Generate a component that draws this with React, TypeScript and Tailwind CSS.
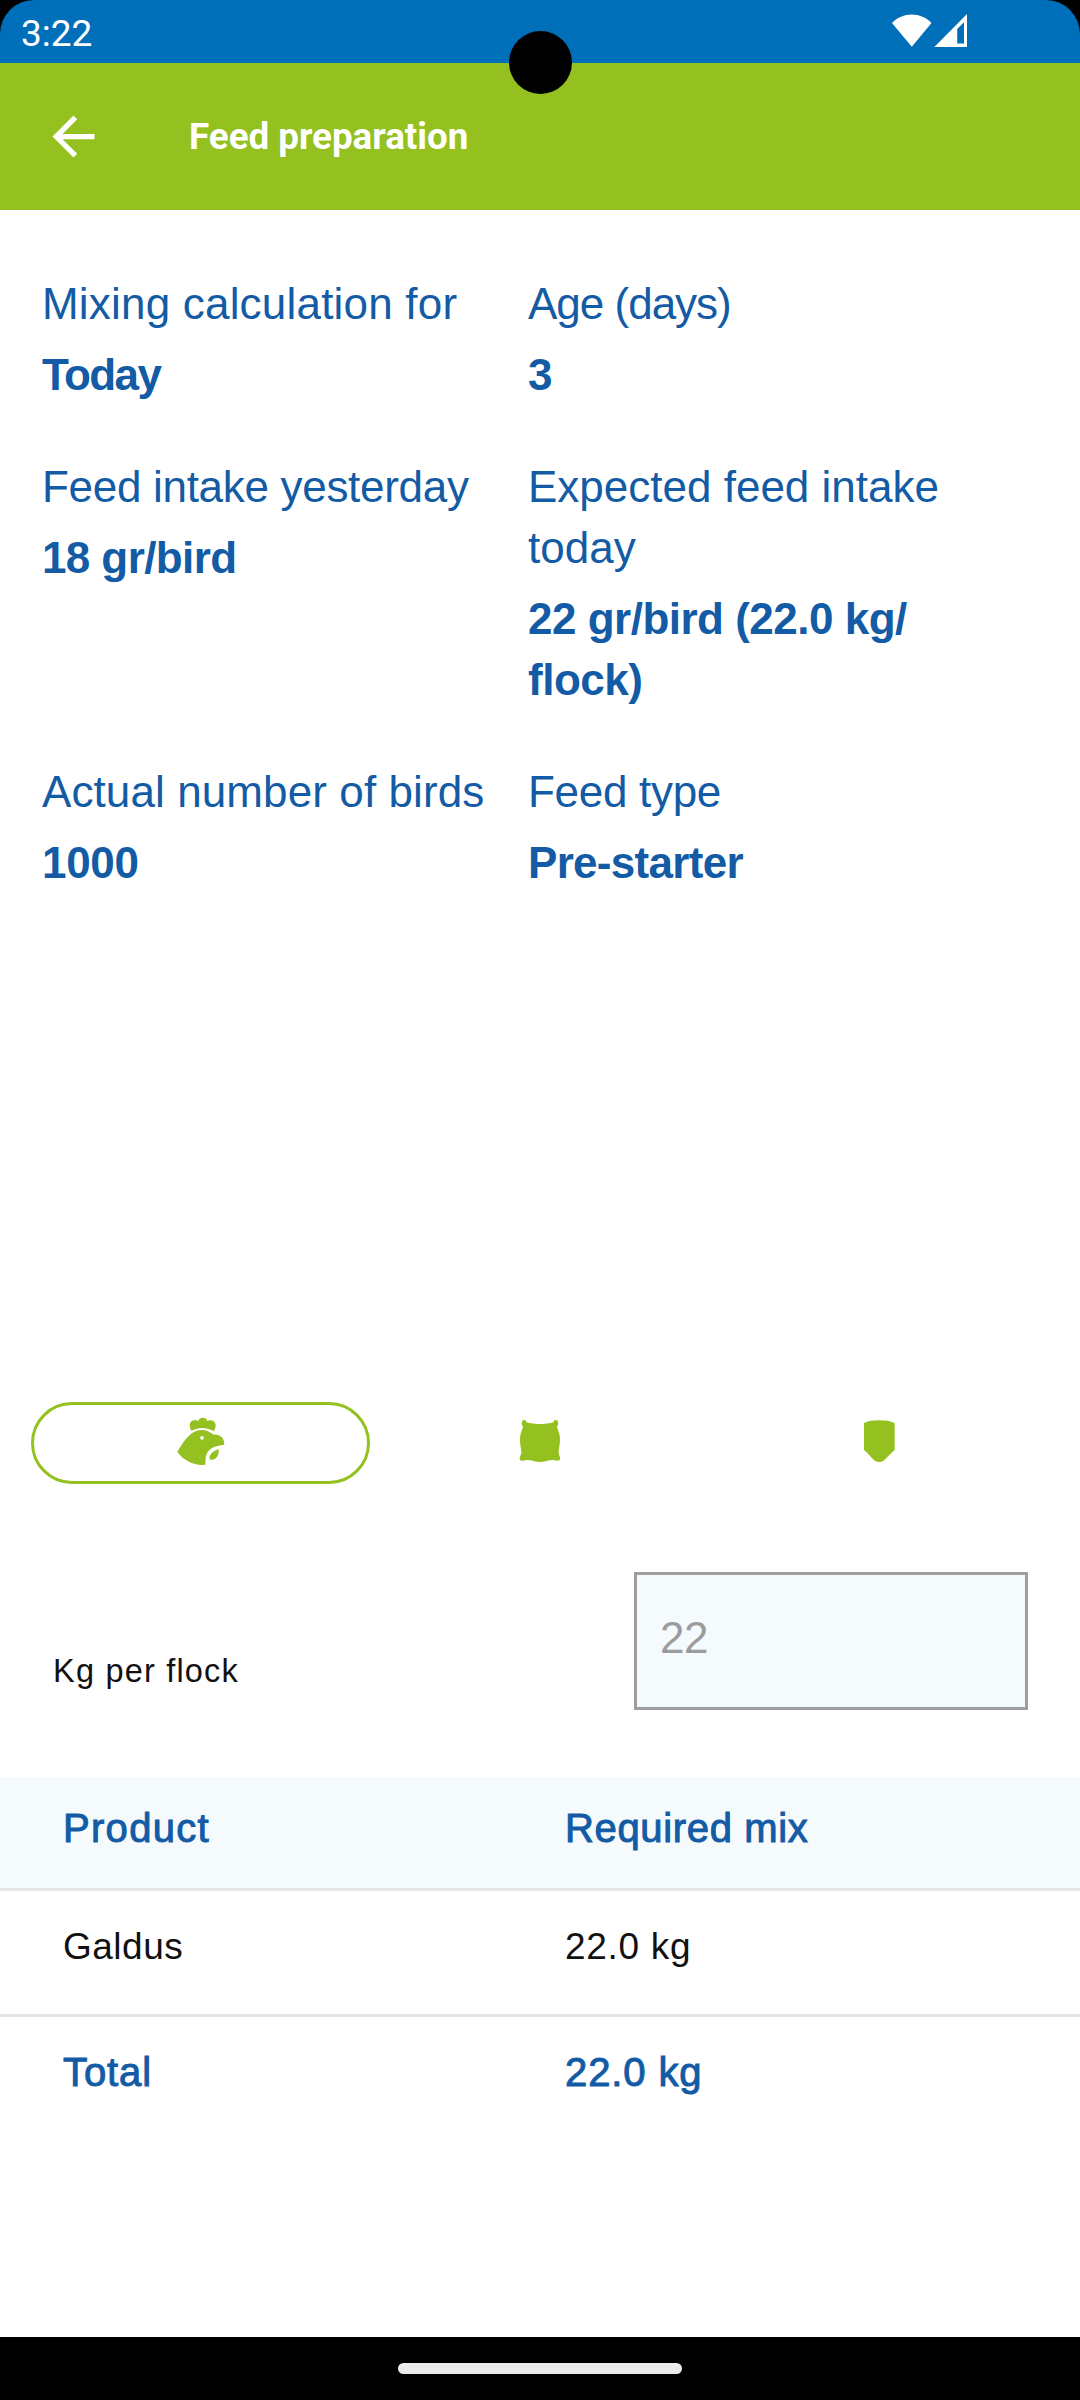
import type { ReactNode } from 'react';

interface Item {
  label: string;
  value: string;
  labelCls: string;
  valueCls: string;
}

const ITEMS: Item[] = [
  { label: 'Mixing calculation for', value: 'Today', labelCls: 'tracking-[0.2px]', valueCls: 'tracking-[-1.6px]' },
  { label: 'Age (days)', value: '3', labelCls: 'tracking-[-1px]', valueCls: '' },
  { label: 'Feed intake yesterday', value: '18 gr/bird', labelCls: 'tracking-[-0.3px]', valueCls: 'tracking-[-0.6px]' },
  { label: 'Expected feed intake today', value: '22 gr/bird (22.0 kg/\nflock)', labelCls: '', valueCls: 'tracking-[-0.5px]' },
  { label: 'Actual number of birds', value: '1000', labelCls: 'tracking-[0.1px]', valueCls: 'tracking-[-0.3px]' },
  { label: 'Feed type', value: 'Pre-starter', labelCls: 'tracking-[-0.3px]', valueCls: 'tracking-[-0.7px]' },
];

function StatusIcons() {
  return (
    <svg className="h-[34px] w-[76px]" viewBox="0 0 76 34" fill="#fff">
      <path d="M1 10C11.500-1.500 30-1.500 40.500 10L20.800 33.800Z" />
      <path fillRule="evenodd" d="M43.300 34L76 1V34ZM66.200 16V30.500H73V9.200Z" />
    </svg>
  );
}

function ChickenIcon() {
  return (
    <svg className="h-12 w-12" viewBox="48 48 144 144" fill="currentColor">
      <g transform="translate(-2 15)">
        <path d="M94 74C86 66 85 44 101 43C108 42 111 43 114 45C116 33 138 32 141 45C152 38 168 46 166 60C165 68 162 73 160 76C150 69 136 66 124 66C112 67 102 70 94 74Z" />
        <path
          fillRule="evenodd"
          d="M51 138C67 112 88 72 125 72C140 72 150 79 160 86C178 84 191 96 192 112L190 117C180 118 170 119 160 124C143 132 137 145 136 157L135 176C105 180 70 165 51 138ZM125 90a5.500 5.500 0 1 0 .1 0Z"
        />
        <path d="M175 130C158 134 145 147 148 160C162 167 178 150 175 130Z" />
      </g>
    </svg>
  );
}

function SackIcon() {
  return (
    <svg className="h-12 w-12" viewBox="78 48 144 144" fill="currentColor">
      <path d="M109 64C135 71 165 71 191 64C189 56 202 54 204 63C206 69 203 73 201 77C203 87 210 96 210 115C210 133 206 142 206 156C207 162 211 168 210 174C209 182 198 178 190 177C177 176 165 183 150 183C135 183 124 176 110 177C102 178 91 182 89 175C88 168 93 162 94 156C94 142 90 133 90 115C90 96 97 87 99 77C97 73 94 69 96 62C98 54 110 56 109 64Z" />
    </svg>
  );
}

function SiloIcon() {
  return (
    <svg className="h-12 w-12" viewBox="46 48 144 144" fill="currentColor">
      <path d="M73 66C85 60 100 58 118 58C137 58 152 60 165 66V147C152 156 145 168 131 180Q118 186 106 180C92 168 86 156 73 147Z" />
    </svg>
  );
}

function Tab({ active, children }: { active?: boolean; children: ReactNode }) {
  return (
    <button
      className={`flex h-[82px] items-center justify-center rounded-full border-[3px] pb-[4px] text-[#94c11f] ${active ? 'border-[#94c11f]' : 'border-transparent'}`}
    >
      {children}
    </button>
  );
}

export default function App() {
  return (
    <div className="flex h-[2400px] w-[1080px] flex-col bg-black font-['Liberation_Sans',Arial,sans-serif]">
      {/* Status bar */}
      <div className="relative flex h-[63px] shrink-0 items-center justify-between rounded-t-[34px] bg-[#006fba] pr-[113px] pl-[21px]">
        <span className="pt-[3px] font-[Roboto,sans-serif] text-[37px] leading-none text-white">3:22</span>
        <div className="pb-[3px]"><StatusIcons /></div>
        <div className="absolute top-[31px] left-[509px] h-[63px] w-[63px] rounded-full bg-black" />
      </div>

      {/* App bar */}
      <header className="flex h-[147px] shrink-0 items-center bg-[#94c11f] pl-[42px] text-white">
        <svg className="h-[63px] w-[63px]" viewBox="0 0 24 24" fill="currentColor">
          <path d="M20 11H7.830l5.590-5.590L12 4l-8 8 8 8 1.410-1.410L7.830 13H20v-2z" />
        </svg>
        <h1 className="ml-[84px] pt-[2px] font-[Roboto,sans-serif] text-[36.750px] leading-none font-bold">Feed preparation</h1>
      </header>

      <main className="flex flex-1 flex-col bg-white">
        <dl className="grid h-[1192px] grid-cols-[486px_486px] content-start gap-y-[51px] pt-[63px] pl-[42px] text-[44px] leading-[61px] text-[#135ba5]">
          {ITEMS.map((it) => (
            <div key={it.label}>
              <dt className={it.labelCls}>{it.label}</dt>
              <dd className={`mt-[10px] font-bold whitespace-pre-line ${it.valueCls}`}>{it.value}</dd>
            </div>
          ))}
        </dl>

        <div className="grid grid-cols-3 pr-8 pl-[31px]">
          <Tab active><ChickenIcon /></Tab>
          <Tab><SackIcon /></Tab>
          <Tab><SiloIcon /></Tab>
        </div>

        <div className="mt-[88px] flex h-[205px] items-start justify-between pr-[52px] pl-[53px]">
          <span className="mt-[79px] text-[32.500px] leading-[40px] tracking-[1.200px] text-[#111]">Kg per flock</span>
          <div className="h-[138px] w-[394px] border-[3px] border-[#9c9e9f] bg-[#f5fafd] pt-[38px] pl-[23px] text-[44px] leading-[50px] tracking-[-0.500px] text-[#9a9c9e]">
            22
          </div>
        </div>

        {/* Mix table */}
        <div className="grid h-[114px] grid-cols-[502px_1fr] border-b-[3px] border-[#e4e6e8] bg-[#f5fafd] pt-[28px] pl-[63px] text-[40px] leading-[46px] text-[#135ba5] [-webkit-text-stroke:1px_#135ba5]">
          <span className="tracking-[1.300px]">Product</span>
          <span className="tracking-[0.650px]">Required mix</span>
        </div>
        <div className="grid h-[126px] grid-cols-[502px_1fr] border-b-[3px] border-[#e5e5e5] pt-[35px] pl-[63px] text-[37px] leading-[42px] text-[#111]">
          <span className="tracking-[0.500px]">Galdus</span>
          <span className="tracking-[0.700px]">22.0 kg</span>
        </div>
        <div className="grid grid-cols-[502px_1fr] pt-[32px] pl-[63px] text-[40px] leading-[46px] tracking-[0.900px] text-[#135ba5] [-webkit-text-stroke:1px_#135ba5]">
          <span>Total</span>
          <span>22.0 kg</span>
        </div>
      </main>

      {/* Gesture bar */}
      <div className="flex h-[63px] shrink-0 items-center justify-center bg-black">
        <div className="h-[11px] w-[284px] rounded-full bg-[#ebebeb]" />
      </div>
    </div>
  );
}
